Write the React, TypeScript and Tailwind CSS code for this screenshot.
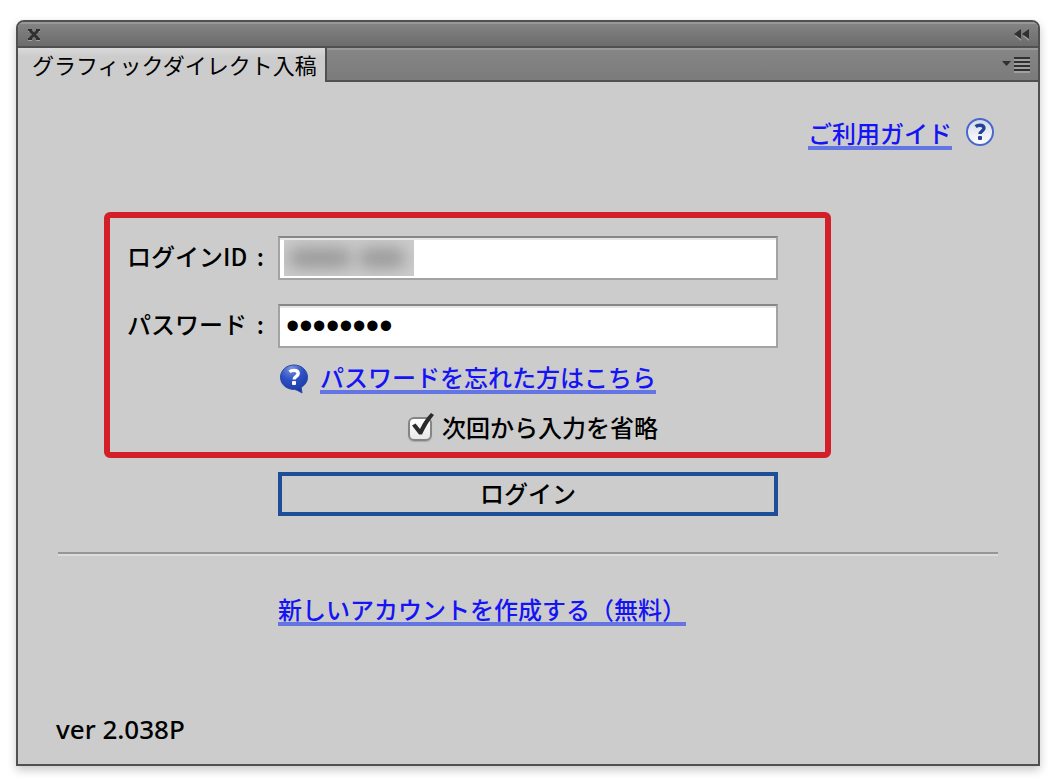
import { useState, type ReactNode } from 'react'

const LINK = 'border-b-4 border-[#6474e2] text-2xl leading-[26px] font-medium text-[#1414f5]'
const FIELD =
  'block h-11 w-full rounded-none border-2 border-[#a3a3a3] border-t-[#868686] bg-white px-1.5 text-black shadow-[inset_0_2px_0_#e6e6e6] outline-none'

function CloseIcon() {
  return (
    <svg viewBox="0 0 12 12" className="h-3 w-3" aria-hidden>
      <path d="M0 2.500h4M8 2.500h4M0 11.500h4M8 11.500h4" stroke="#a0a0a0" />
      <path d="M0 1h4M8 1h4M0 10h4M8 10h4" stroke="#303030" strokeWidth="2" />
      <path d="M2 1.500 10 9.500M10 1.500 2 9.500" stroke="#303030" strokeWidth="2.800" />
    </svg>
  )
}

function CollapseIcon() {
  return (
    <svg viewBox="0 0 16 12" className="h-3 w-4" aria-hidden>
      <path d="M7 2v10L1 7zM15 2v10L9 7z" fill="#a0a0a0" />
      <path d="M7 0v10L0 5zM15 0v10L8 5z" fill="#303030" />
    </svg>
  )
}

function PanelMenuIcon() {
  return (
    <svg viewBox="0 0 28 16" className="h-4 w-7" aria-hidden>
      <path d="M0 4h9L4.500 9z" fill="#303030" />
      <path d="M12 3h16M12 7h16M12 11h16M12 15h16" stroke="#a0a0a0" strokeWidth="2" />
      <path d="M12 1h16M12 5h16M12 9h16M12 13h16" stroke="#303030" strokeWidth="2" />
    </svg>
  )
}

function GuideIcon() {
  return (
    <svg viewBox="0 0 28 28" className="h-7 w-7" aria-hidden>
      <defs>
        <linearGradient id="guide" x1="0" y1="0" x2="0" y2="1">
          <stop offset="0" stopColor="#d3d8e6" />
          <stop offset="1" stopColor="#ffffff" />
        </linearGradient>
      </defs>
      <circle cx="14" cy="14" r="13" fill="url(#guide)" stroke="#4968cd" strokeWidth="2" />
      <path
        d="M9.600 8.600c1.200-1 2.500-1.400 4.200-1.400 2.500 0 4.200 1 4.200 3.100 0 2.800-4 2.800-4 5.700"
        fill="none"
        stroke="#23429a"
        strokeWidth="3.400"
      />
      <rect x="12" y="18" width="4" height="4" rx="1" fill="#23429a" />
    </svg>
  )
}

function HelpBubbleIcon() {
  return (
    <svg viewBox="0 0 28 30" className="h-[30px] w-7" aria-hidden>
      <defs>
        <radialGradient id="bubble" cx="0.4" cy="0.1" r="0.9">
          <stop offset="0" stopColor="#7d94dc" />
          <stop offset="0.5" stopColor="#2c50c4" />
          <stop offset="1" stopColor="#1b389f" />
        </radialGradient>
      </defs>
      <path
        d="M14 1C6.300 1 .5 6.500 .5 13.200S6 25 13 25.400c2.500 0 4 .6 9 3.600l-.8-5.600c3.800-2.200 6.300-5.800 6.300-10.200C27.500 6.500 21.700 1 14 1z"
        fill="url(#bubble)"
        stroke="#2848ad"
      />
      <path
        d="M9.500 7.800c1.200-1 2.600-1.400 4.400-1.400 2.600 0 4.300 1 4.300 3.200 0 2.800-4.100 2.800-4.100 5.900"
        fill="none"
        stroke="#fff"
        strokeWidth="3.400"
      />
      <rect x="12" y="17" width="4" height="4" rx="1" fill="#fff" />
    </svg>
  )
}

function FieldLabel({ htmlFor, children }: { htmlFor: string; children: ReactNode }) {
  return (
    <label htmlFor={htmlFor} className="flex w-[137px] justify-between pb-1 text-2xl leading-8">
      <span>{children}</span>
      <span>:</span>
    </label>
  )
}

export default function App() {
  const [loginId, setLoginId] = useState('')
  const [password, setPassword] = useState('password')
  const [remember, setRemember] = useState(true)

  return (
    <div className="flex min-h-screen flex-col bg-white px-4 pt-5 pb-3.5 font-['Noto_Sans_CJK_JP',sans-serif] font-medium text-black">
      <div className="flex flex-1 flex-col overflow-hidden rounded-t-lg border-2 border-[#505050] bg-[#cccccc] shadow-[0_4px_10px_rgba(0,0,0,0.22)]">
        <header className="flex h-[26px] items-center justify-between border-b-2 border-[#505050] bg-linear-to-b from-[#858585] to-[#6c6c6c] pt-0.5 pr-2 pl-2.5 shadow-[inset_0_2px_0_#989898]">
          <button type="button" aria-label="閉じる">
            <CloseIcon />
          </button>
          <button type="button" aria-label="折りたたむ">
            <CollapseIcon />
          </button>
        </header>

        <div className="flex h-[34px]">
          <div className="bg-linear-to-b from-[#dadada] to-[#cccccc] to-25% pr-2 pl-3.5 text-[22px] leading-8 font-normal whitespace-nowrap">
            グラフィックダイレクト入稿
          </div>
          <div className="flex flex-1 items-center justify-end border-b-2 border-l-2 border-[#505050] bg-linear-to-b from-[#868686] to-[#7b7b7b] pt-0.5 pr-2 shadow-[inset_0_2px_0_#999999]">
            <button type="button" aria-label="パネルメニュー">
              <PanelMenuIcon />
            </button>
          </div>
        </div>

        <main className="flex flex-1 flex-col px-[38px] pt-9 pb-[17px]">
          <div className="flex h-8 items-start justify-end gap-3.5 pr-1.5">
            <a href="#guide" className={`mt-0.5 ${LINK}`}>
              ご利用ガイド
            </a>
            <GuideIcon />
          </div>

          <form onSubmit={(e) => e.preventDefault()}>
            <div className="mt-[62px] ml-12 grid max-w-[727px] grid-cols-[151px_1fr] items-center rounded-md border-6 border-[#d21f28] pt-[18px] pr-[47px] pb-[11px] pl-[17px]">
              <FieldLabel htmlFor="login-id">ログインID</FieldLabel>
              <div className="relative">
                <input
                  id="login-id"
                  type="text"
                  value={loginId}
                  onChange={(e) => setLoginId(e.target.value)}
                  className={`${FIELD} text-2xl`}
                />
                {/* masked account name */}
                <div className="pointer-events-none absolute top-1 left-1.5 h-9 w-[130px] overflow-hidden bg-[#cccccc]">
                  <div className="absolute top-2 left-1 h-5 w-16 rounded-full bg-[#999999] blur-[8px]" />
                  <div className="absolute top-2 right-2 h-5 w-12 rounded-full bg-[#999999] blur-[8px]" />
                </div>
              </div>

              <div className="col-span-2 h-6" />

              <FieldLabel htmlFor="password">パスワード</FieldLabel>
              <input
                id="password"
                type="password"
                value={password}
                onChange={(e) => setPassword(e.target.value)}
                className={`${FIELD} font-['Liberation_Sans',sans-serif] text-[38px] font-normal`}
              />

              <div className="col-start-2 mt-4 flex gap-3 pl-0.5">
                <HelpBubbleIcon />
                <a href="#forgot" className={LINK}>
                  パスワードを忘れた方はこちら
                </a>
              </div>

              <label className="col-start-2 mt-[23px] flex items-center gap-2.5 pl-[130px] text-2xl leading-5">
                <span className="relative h-6 w-6">
                  <input
                    type="checkbox"
                    checked={remember}
                    onChange={(e) => setRemember(e.target.checked)}
                    className="block h-6 w-6 appearance-none rounded-md border-2 border-[#858585] bg-linear-to-b from-white to-[#e8e8e8] shadow-[0_1px_1px_#aaaaaa]"
                  />
                  {remember && (
                    <svg viewBox="0 0 24 26" className="pointer-events-none absolute -top-1 left-0.5 h-[26px] w-6" aria-hidden>
                      <path d="M2 12.500 5.500 10.500l4.500 5.500C13 9.500 17 4 21 0l3 2C19 8 15.500 14 12 21.500H9z" fill="#2b2b2b" />
                    </svg>
                  )}
                </span>
                <span className="pb-1">次回から入力を省略</span>
              </label>
            </div>

            <div className="mt-3.5 ml-[222px] max-w-[500px]">
              <button
                type="submit"
                className="block h-11 w-full border-4 border-[#1f4e99] pb-0.5 text-2xl leading-8"
              >
                ログイン
              </button>
            </div>
          </form>

          <hr className="mx-0.5 mt-9 h-1 border-t-2 border-b-2 border-t-[#969696] border-b-[#dcdcdc]" />

          <div className="mt-10 ml-[222px] flex">
            <a href="#signup" className={LINK}>
              新しいアカウントを作成する（無料）
            </a>
          </div>

          <p className="mt-auto font-['Noto_Sans',sans-serif] text-[26px] leading-9">ver 2.038P</p>
        </main>
      </div>
    </div>
  )
}
